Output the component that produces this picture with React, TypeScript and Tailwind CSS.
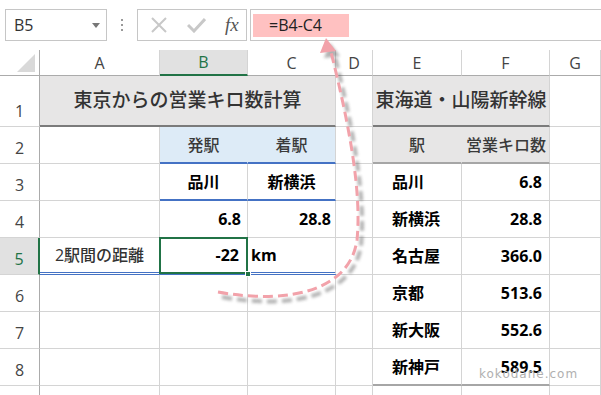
import React from 'react';

const font = { fontFamily: '"Open Sans", "Noto Sans CJK JP", sans-serif' };

// column widths: row header, A, B, C, D, E, F, G
const W = [40, 120, 88, 88, 37, 89, 88, 51];

function Cell({
  w,
  className = '',
  children,
}: {
  w: number;
  className?: string;
  children?: React.ReactNode;
}) {
  return (
    <div
      style={{ width: w }}
      className={`shrink-0 h-full box-border flex items-center border-r border-b border-[#d4d4d4] ${className}`}
    >
      {children}
    </div>
  );
}

function RowHead({ n, active }: { n: number; active?: boolean }) {
  return (
    <Cell
      w={W[0]}
      className={`!items-end justify-center pb-[3px] text-[16px] ${
        active
          ? 'bg-[#e1e1e1] text-[#217346] !border-r-[#217346] border-r-2'
          : 'text-[#444] !border-r-[#ababab]'
      }`}
    >
      {n}
    </Cell>
  );
}

const stations = [
  { name: '品川', km: '6.8' },
  { name: '新横浜', km: '28.8' },
  { name: '名古屋', km: '366.0' },
  { name: '京都', km: '513.6' },
  { name: '新大阪', km: '552.6' },
  { name: '新神戸', km: '589.5' },
];

function TableCells({ i }: { i: number }) {
  const s = stations[i];
  const last = i === stations.length - 1;
  const bb = last ? '!border-b-2 !border-b-[#a6a6a6]' : '';
  return (
    <>
      <Cell w={W[5]} className={`pl-[19px] font-bold text-[16px] text-black ${bb}`}>
        {s.name}
      </Cell>
      <Cell w={W[6]} className={`justify-end pr-[7px] font-bold text-[16px] text-black ${bb}`}>
        {s.km}
      </Cell>
    </>
  );
}

export default function App() {
  return (
    <div style={font} className="relative w-[601px] h-[395px] overflow-hidden bg-white text-[#333]">
      {/* formula bar */}
      <div className="flex items-start h-[50px] pt-[9px]">
        <div className="ml-[5px] w-[102px] h-[32px] box-border border border-[#c6c6c6] flex items-center justify-between pl-[8px] pr-[6px]">
          <span className="text-[16px] text-[#333]">B5</span>
          <svg width="8" height="5" viewBox="0 0 8 5">
            <path d="M0 0 L8 0 L4 5 Z" fill="#777" />
          </svg>
        </div>
        <div className="w-[30px] h-[32px] flex flex-col items-center justify-center gap-[3px]">
          <div className="w-[2px] h-[2px] bg-[#999]" />
          <div className="w-[2px] h-[2px] bg-[#999]" />
          <div className="w-[2px] h-[2px] bg-[#999]" />
        </div>
        <div className="w-[110px] h-[32px] box-border border border-[#c6c6c6] flex items-center pl-[12px] gap-[19px]">
          <svg width="18" height="18" viewBox="0 0 18 18">
            <path d="M2 2 L16 16 M16 2 L2 16" stroke="#c8c8c8" strokeWidth="2" />
          </svg>
          <svg width="19" height="16" viewBox="0 0 19 16">
            <path d="M1 8 L7 14 L18 2" stroke="#c8c8c8" strokeWidth="3" fill="none" />
          </svg>
          <span className="italic text-[19px] text-[#555]" style={{ fontFamily: '"Liberation Serif", serif' }}>
            fx
          </span>
        </div>
        <div className="ml-[3px] flex-1 h-[32px] box-border border border-r-0 border-[#c6c6c6] flex items-center pl-[2px]">
          <div className="w-[96px] h-[23px] bg-[#ffc1c1] flex items-center pl-[16px] text-[16px] text-[#222]">
            =B4-C4
          </div>
        </div>
      </div>

      {/* column headers */}
      <div className="flex h-[26px]">
        <div className="w-[40px] h-full box-border border-r border-b border-[#ababab] flex items-end justify-end pr-[4px] pb-[3px]">
          <svg width="18" height="18" viewBox="0 0 18 18">
            <path d="M18 0 L18 18 L0 18 Z" fill="#d9d9d9" />
          </svg>
        </div>
        {['A', 'B', 'C', 'D', 'E', 'F', 'G'].map((c, i) => (
          <div
            key={c}
            style={{ width: W[i + 1] }}
            className={`shrink-0 h-full box-border border-r border-[#d4d4d4] flex items-center justify-center text-[16px] ${
              c === 'B'
                ? 'bg-[#e1e1e1] text-[#217346] border-b-2 border-b-[#217346]'
                : 'text-[#444] border-b border-b-[#ababab]'
            }`}
          >
            {c}
          </div>
        ))}
      </div>

      {/* row 1 */}
      <div className="flex h-[51px]">
        <RowHead n={1} />
        <Cell
          w={W[1] + W[2] + W[3]}
          className="justify-center bg-[#e7e6e6] font-medium text-[19px] text-[#333] !border-b-2 !border-b-[#7b7b7b]"
        >
          東京からの営業キロ数計算
        </Cell>
        <Cell w={W[4]} />
        <Cell
          w={W[5] + W[6]}
          className="justify-center bg-[#e7e6e6] font-medium text-[19px] text-[#333] !border-b-2 !border-b-[#7b7b7b]"
        >
          東海道・山陽新幹線
        </Cell>
        <Cell w={W[7]} />
      </div>

      {/* row 2 */}
      <div className="flex h-[37px]">
        <RowHead n={2} />
        <Cell w={W[1]} />
        <Cell w={W[2]} className="justify-center bg-[#ddebf7] font-medium text-[16px] text-[#3a3a3a] !border-r-[#ddebf7] !border-b-2 !border-b-[#4472c4]">
          発駅
        </Cell>
        <Cell w={W[3]} className="justify-center bg-[#ddebf7] font-medium text-[16px] text-[#3a3a3a] !border-b-2 !border-b-[#4472c4]">
          着駅
        </Cell>
        <Cell w={W[4]} />
        <Cell w={W[5]} className="justify-center bg-[#e7e6e6] font-medium text-[16px] text-[#3a3a3a] !border-r-[#e7e6e6] !border-b-2 !border-b-[#a6a6a6]">
          駅
        </Cell>
        <Cell w={W[6]} className="justify-end pr-[3px] bg-[#e7e6e6] font-medium text-[16px] text-[#3a3a3a] !border-b-2 !border-b-[#a6a6a6]">
          営業キロ数
        </Cell>
        <Cell w={W[7]} />
      </div>

      {/* row 3 */}
      <div className="flex h-[37px]">
        <RowHead n={3} />
        <Cell w={W[1]} />
        <Cell w={W[2]} className="justify-center font-bold text-[16px] text-black !border-b-2 !border-b-[#4472c4]">
          品川
        </Cell>
        <Cell w={W[3]} className="justify-center font-bold text-[16px] text-black !border-b-2 !border-b-[#4472c4]">
          新横浜
        </Cell>
        <Cell w={W[4]} />
        <TableCells i={0} />
        <Cell w={W[7]} />
      </div>

      {/* row 4 */}
      <div className="flex h-[37px]">
        <RowHead n={4} />
        <Cell w={W[1]} />
        <Cell w={W[2]} className="justify-end pr-[6px] font-bold text-[16px] text-black">
          6.8
        </Cell>
        <Cell w={W[3]} className="justify-end pr-[4px] font-bold text-[16px] text-black">
          28.8
        </Cell>
        <Cell w={W[4]} />
        <TableCells i={1} />
        <Cell w={W[7]} />
      </div>

      {/* row 5 */}
      <div className="flex h-[37px]">
        <RowHead n={5} active />
        <Cell w={W[1]} className="justify-center font-medium text-[16px] text-[#333] !border-b-[3px] !border-double !border-b-[#4472c4]">
          2駅間の距離
        </Cell>
        <Cell w={W[2]} className="relative justify-end pr-[8px] font-bold text-[16px] text-black !border-b-[3px] !border-double !border-b-[#4472c4]">
          -22
          <div className="absolute -left-[1px] -top-[1px] -right-[1px] -bottom-[2px] border-2 border-[#217346]" />
          <div className="absolute -right-[4px] -bottom-[5px] w-[6px] h-[6px] bg-[#217346] border border-white" />
        </Cell>
        <Cell w={W[3]} className="pl-[3px] font-bold text-[16px] text-black !border-b-[3px] !border-double !border-b-[#4472c4]">
          km
        </Cell>
        <Cell w={W[4]} />
        <TableCells i={2} />
        <Cell w={W[7]} />
      </div>

      {[6, 7, 8].map((n, k) => (
        <div key={n} className="flex h-[37px]">
          <RowHead n={n} />
          <Cell w={W[1]} />
          <Cell w={W[2]} />
          <Cell w={W[3]} />
          <Cell w={W[4]} />
          <TableCells i={3 + k} />
          <Cell w={W[7]} />
        </div>
      ))}

      <div className="flex h-[37px]">
        <RowHead n={9} />
        {W.slice(1).map((w, i) => (
          <Cell key={i} w={w} />
        ))}
      </div>

      {/* watermark */}
      <div className="absolute left-[479px] top-[365px] text-[12px] tracking-[1px] text-[#b0b0b0]" style={{ fontFamily: '"DejaVu Sans", sans-serif' }}>
        kokodane.com
      </div>

      {/* dashed arrow from B5 to formula */}
      <svg className="absolute left-0 top-0 pointer-events-none" width="601" height="395" viewBox="0 0 601 395">
        <defs>
          <filter id="blur" x="-20%" y="-20%" width="140%" height="140%">
            <feGaussianBlur stdDeviation="1.6" />
          </filter>
        </defs>
        <g transform="translate(4 5)" filter="url(#blur)" opacity="0.45">
          <path
            d="M218 292 C290 305, 350 290, 357 240 C362 190, 348 120, 331 52"
            stroke="#555"
            strokeWidth="4"
            strokeDasharray="10 5"
            fill="none"
          />
          <path d="M326 38 L320 53 L336 51 Z" fill="#555" />
        </g>
        <path
          d="M218 292 C290 305, 350 290, 357 240 C362 190, 348 120, 331 52"
          stroke="#f2a2aa"
          strokeWidth="3"
          strokeDasharray="10 5"
          fill="none"
        />
        <path d="M326 38 L320 53 L336 51 Z" fill="#f2a2aa" />
      </svg>
    </div>
  );
}
